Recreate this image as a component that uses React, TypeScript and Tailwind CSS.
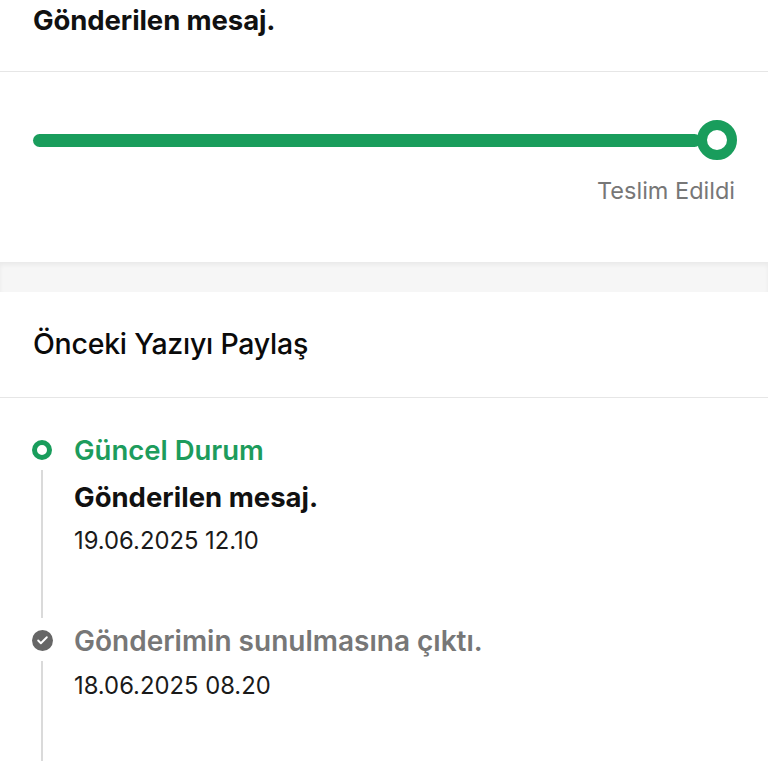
import { Check } from "lucide-react"

const font = { fontFamily: "Inter, 'Noto Sans', sans-serif" }

export default function App() {
  return (
    <div className="w-[768px] h-[768px] overflow-hidden bg-white" style={font}>
      {/* header */}
      <div className="h-[72px] px-[33px] pt-[3px] border-b border-[#e6e6e6]">
        <h1 className="text-[27.5px] leading-[34px] font-bold text-[#111] tracking-[-0.1px]">Gönderilen mesaj.</h1>
      </div>

      {/* progress */}
      <div className="h-[190px] px-[33px] pt-[48px]">
        <div className="flex items-center">
          <div className="flex-1 h-[13px] rounded-full bg-[#199d5c] -mr-[4px]" />
          <div className="w-[40px] h-[40px] rounded-full border-[10px] border-[#199d5c] bg-white -mr-[2px]" />
        </div>
        <p className="mt-[16px] text-right text-[23.5px] leading-[30px] text-[#777]">Teslim Edildi</p>
      </div>

      {/* gap band */}
      <div className="h-[30px] bg-[#f6f6f6] shadow-[inset_0_3px_4px_rgba(0,0,0,0.05)]" />

      {/* share */}
      <div className="h-[106px] px-[33px] flex items-center border-b border-[#e6e6e6]">
        <h2 className="text-[28.5px] font-medium text-[#0a0a0a] tracking-[-0.25px]">Önceki Yazıyı Paylaş</h2>
      </div>

      {/* timeline */}
      <div className="px-[32px] pt-[37px]">
        <div className="flex gap-[22px]">
          <div className="flex flex-col items-center w-[20px]">
            <div className="mt-[5px] w-[20px] h-[20px] rounded-full border-[5px] border-[#199d5c] bg-white" />
            <div className="mt-[10px] w-[2px] h-[148px] bg-[#dadada]" />
          </div>
          <div className="flex flex-col">
            <span className="text-[27.5px] leading-[30px] font-semibold text-[#1d9c5c]">Güncel Durum</span>
            <span className="mt-[16px] text-[27.5px] leading-[32px] font-bold text-[#111]">Gönderilen mesaj.</span>
            <span className="mt-[12px] text-[23.8px] leading-[32px] text-[#1a1a1a]">19.06.2025 12.10</span>
          </div>
        </div>

        <div className="flex gap-[22px] mt-[8px]">
          <div className="flex flex-col items-center w-[20px]">
            <div className="mt-[4px] w-[21px] h-[21px] rounded-full bg-[#666] flex items-center justify-center">
              <Check className="w-[13px] h-[13px] text-white" strokeWidth={3.5} />
            </div>
            <div className="mt-[10px] w-[2px] h-[100px] bg-[#dadada]" />
          </div>
          <div className="flex flex-col">
            <span className="text-[28px] leading-[30px] font-semibold text-[#777]">Gönderimin sunulmasına çıktı.</span>
            <span className="mt-[14px] text-[23.8px] leading-[32px] text-[#1a1a1a]">18.06.2025 08.20</span>
          </div>
        </div>
      </div>
    </div>
  )
}
